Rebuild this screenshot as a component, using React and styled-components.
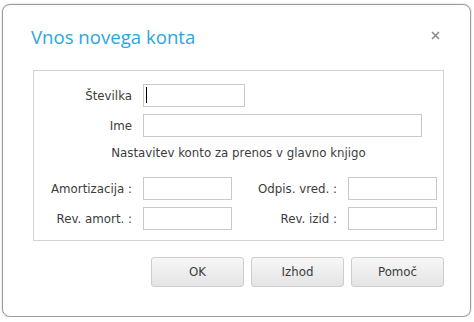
import React from "react";
import styled, { createGlobalStyle } from "styled-components";

const Global = createGlobalStyle`
  html, body { margin: 0; padding: 0; background: #ffffff; }
  body { font-family: "DejaVu Sans", Tahoma, sans-serif; }
`;

const Dialog = styled.div`
  box-sizing: border-box;
  margin: 4px 0 0 2px;
  width: 469px;
  height: 313px;
  background: #ffffff;
  border: 1px solid #9c9c9c;
  border-radius: 8px;
  box-shadow: 0 0 2px rgba(0, 0, 0, 0.25);
  display: flex;
  flex-direction: column;
`;

const Header = styled.div`
  display: flex;
  align-items: center;
  justify-content: space-between;
  padding: 20px 30px 0 28px;
  height: 24px;
`;

const Title = styled.h1`
  margin: 0;
  font-family: "Open Sans", sans-serif;
  font-weight: 400;
  font-size: 18.6px;
  line-height: 24px;
  color: #2ba5e0;
`;

const Close = styled.button`
  border: 0;
  background: none;
  padding: 0;
  width: 9px;
  height: 9px;
  display: flex;
  margin-top: -3px;
  cursor: pointer;
`;

const Body = styled.div`
  padding: 21px 26px 0 30px;
`;

const Group = styled.fieldset`
  box-sizing: border-box;
  margin: 0;
  width: 411px;
  height: 171px;
  border: 1px solid #d2d2d2;
  padding: 13px 0 0 0;
  display: flex;
  flex-direction: column;
`;

const Row = styled.div`
  display: flex;
  align-items: center;
  margin-top: ${(p) => p.$mt || 0}px;
`;

const Label = styled.label`
  width: ${(p) => p.$w}px;
  margin-right: 11px;
  margin-left: ${(p) => p.$ml || 0}px;
  text-align: right;
  font-size: 11.8px;
  color: #3c3c3c;
  white-space: nowrap;
`;

const FieldWrap = styled.div`
  position: relative;
  display: flex;
`;

const Field = styled.input`
  box-sizing: border-box;
  width: ${(p) => p.$w}px;
  height: ${(p) => p.$h || 23}px;
  border: 1px solid #c9c9c9;
  border-radius: 0;
  padding: 0 4px;
  font-family: "DejaVu Sans", Tahoma, sans-serif;
  font-size: 11px;
  outline: none;
  background: #fff;
`;

const Caret = styled.span`
  position: absolute;
  left: 3px;
  top: 3px;
  width: 1px;
  height: 16px;
  background: #000;
`;

const Note = styled.div`
  margin-top: 9px;
  text-align: center;
  font-size: 11.8px;
  line-height: 14px;
  color: #3c3c3c;
`;

const Buttons = styled.div`
  display: flex;
  justify-content: flex-end;
  gap: 7px;
  margin-top: 16px;
  width: 411px;
`;

const Button = styled.button`
  box-sizing: border-box;
  width: 93px;
  height: 30px;
  border: 1px solid #cdcdcd;
  border-radius: 3px;
  background: linear-gradient(#f7f7f7, #e4e4e4);
  font-family: "DejaVu Sans", Tahoma, sans-serif;
  font-size: 11.8px;
  font-weight: 400;
  color: #3c3c3c;
  padding: 0;
`;

export default function App() {
  return (
    <>
      <Global />
      <Dialog>
        <Header>
          <Title>Vnos novega konta</Title>
          <Close aria-label="Zapri">
            <svg width="9" height="9" viewBox="0 0 9 9">
              <path d="M1 1 L8 8 M8 1 L1 8" stroke="#8a8a8a" strokeWidth="1.6" />
            </svg>
          </Close>
        </Header>
        <Body>
          <Group>
            <Row>
              <Label $w={98}>Številka</Label>
              <FieldWrap>
                <Field $w={102} />
                <Caret />
              </FieldWrap>
            </Row>
            <Row $mt={7}>
              <Label $w={98}>Ime</Label>
              <Field $w={279} />
            </Row>
            <Note>Nastavitev konto za prenos v glavno knjigo</Note>
            <Row $mt={17}>
              <Label $w={98}>Amortizacija :</Label>
              <Field $w={89} />
              <Label $w={94} $ml={11}>Odpis. vred. :</Label>
              <Field $w={89} />
            </Row>
            <Row $mt={7}>
              <Label $w={98}>Rev. amort. :</Label>
              <Field $w={89} />
              <Label $w={94} $ml={11}>Rev. izid :</Label>
              <Field $w={89} />
            </Row>
          </Group>
          <Buttons>
            <Button>OK</Button>
            <Button>Izhod</Button>
            <Button>Pomoč</Button>
          </Buttons>
        </Body>
      </Dialog>
    </>
  );
}
